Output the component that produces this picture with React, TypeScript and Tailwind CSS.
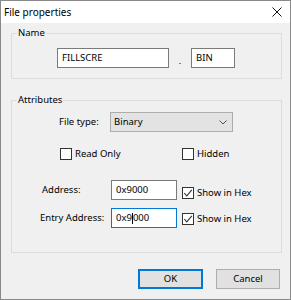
import React from "react";

function CheckBox({ checked, label }: { checked?: boolean; label: string }) {
  return (
    <div className="flex items-center h-[12px]">
      <div className="w-[12px] h-[12px] border border-[#333333] bg-white flex items-center justify-center shrink-0">
        {checked && (
          <svg width="10" height="10" viewBox="0 0 10 10">
            <polyline points="1.2,5 3.8,7.8 8.8,1.8" fill="none" stroke="#333333" strokeWidth="1.1" />
          </svg>
        )}
      </div>
      <span className="ml-[3px] leading-[12px]">{label}</span>
    </div>
  );
}

function TextBox({ children, width, focused }: { children: React.ReactNode; width: string; focused?: boolean }) {
  return (
    <div
      className={`${width} h-[20px] bg-white border ${focused ? "border-[#0078d7]" : "border-[#7a7a7a]"} flex items-center pl-[4px] shrink-0`}
    >
      {children}
    </div>
  );
}

export default function App() {
  return (
    <div className="w-[291px] h-[300px] border border-[#8a8a8a] flex flex-col bg-[#f0f0f0] font-['Noto_Sans',sans-serif] text-[9.5px] text-black">
      <div className="h-[22px] bg-white flex items-center justify-between pl-[3px] pr-[8px] shrink-0">
        <span className="text-[10px]">File properties</span>
        <svg width="10" height="10" viewBox="0 0 10 10">
          <line x1="0.5" y1="0.5" x2="9.5" y2="9.5" stroke="#111" strokeWidth="1" />
          <line x1="9.5" y1="0.5" x2="0.5" y2="9.5" stroke="#111" strokeWidth="1" />
        </svg>
      </div>
      <div className="flex-1 flex flex-col pt-[4px] pl-[10px] pr-[8px]">
        <fieldset className="border border-[#dcdcdc]">
          <legend className="ml-[5px] px-[1px] leading-[12px]">Name</legend>
          <div className="flex items-center pt-[9px] pb-[10px] pl-[45px]">
            <TextBox width="w-[112px]">FILLSCRE</TextBox>
            <span className="w-[22px] text-center pt-[6px]">.</span>
            <TextBox width="w-[44px]">BIN</TextBox>
          </div>
        </fieldset>
        <fieldset className="border border-[#dcdcdc] mt-[15px]">
          <legend className="ml-[5px] px-[1px] leading-[12px]">Attributes</legend>
          <div className="flex flex-col pt-[6px] pb-[24px]">
            <div className="flex items-center pl-[47px]">
              <span className="w-[51px]">File type:</span>
              <div className="w-[123px] h-[20px] bg-[#e3e3e3] border border-[#adadad] flex items-center justify-between pl-[3px] pr-[5px]">
                <span>Binary</span>
                <svg width="8" height="5" viewBox="0 0 8 5">
                  <polyline points="0.5,0.5 4,4 7.5,0.5" fill="none" stroke="#555" strokeWidth="1" />
                </svg>
              </div>
            </div>
            <div className="flex items-center pl-[48px] mt-[16px]">
              <div className="w-[122px]">
                <CheckBox label="Read Only" />
              </div>
              <CheckBox label="Hidden" />
            </div>
            <div className="flex items-start pl-[30px] mt-[20px]">
              <span className="w-[69px] h-[20px] flex items-center">Address:</span>
              <TextBox width="w-[66px]">0x9000</TextBox>
              <div className="ml-[5px] mt-[7px]">
                <CheckBox checked label="Show in Hex" />
              </div>
            </div>
            <div className="flex items-start pl-[28px] mt-[8px]">
              <span className="w-[71px] h-[20px] flex items-center">Entry Address:</span>
              <TextBox width="w-[66px]" focused>
                <span>0x9</span>
                <span className="w-[1px] h-[11px] bg-black" />
                <span>000</span>
              </TextBox>
              <div className="ml-[5px] mt-[5px]">
                <CheckBox checked label="Show in Hex" />
              </div>
            </div>
          </div>
        </fieldset>
        <div className="flex justify-end gap-[13px] mt-[16px] mr-[2px]">
          <button className="w-[65px] h-[20px] bg-[#e1e1e1] border-2 border-[#0078d7] flex items-center justify-center">
            OK
          </button>
          <button className="w-[64px] h-[20px] bg-[#e1e1e1] border border-[#adadad] flex items-center justify-center">
            Cancel
          </button>
        </div>
      </div>
    </div>
  );
}
